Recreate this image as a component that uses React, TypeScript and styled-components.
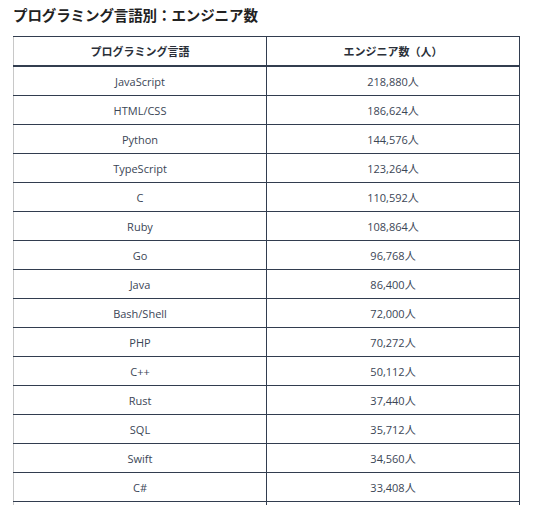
import * as React from "react";
import styled, { createGlobalStyle } from "styled-components";

const rows: [string, string][] = [
	["JavaScript", "218,880人"],
	["HTML/CSS", "186,624人"],
	["Python", "144,576人"],
	["TypeScript", "123,264人"],
	["C", "110,592人"],
	["Ruby", "108,864人"],
	["Go", "96,768人"],
	["Java", "86,400人"],
	["Bash/Shell", "72,000人"],
	["PHP", "70,272人"],
	["C++", "50,112人"],
	["Rust", "37,440人"],
	["SQL", "35,712人"],
	["Swift", "34,560人"],
	["C#", "33,408人"],
	["", ""],
];

const GlobalStyle = createGlobalStyle`
	body {
		margin: 0;
		background: #fff;
		font-family: "Open Sans", "Noto Sans CJK JP", sans-serif;
	}
`;

const App = () => {
	return (
		<Page>
			<GlobalStyle />
			<Title>プログラミング言語別：エンジニア数</Title>
			<Table>
				<thead>
					<tr>
						<HeadCell>プログラミング言語</HeadCell>
						<HeadCell>エンジニア数（人）</HeadCell>
					</tr>
				</thead>
				<tbody>
					{rows.map(([lang, count], i) => (
						<tr key={i}>
							<Cell>{lang}</Cell>
							<Cell>{count}</Cell>
						</tr>
					))}
				</tbody>
			</Table>
		</Page>
	);
};

const Page = styled.div`
	padding: 6px 13px 0 13px;
	width: 507px;
	height: 499px;
	overflow: hidden;
`;

const Title = styled.h2`
	margin: 0 0 12px;
	font-family: "Noto Sans CJK JP", sans-serif;
	font-size: 14.5px;
	font-weight: 700;
	line-height: 18px;
	color: #222;
	letter-spacing: -0.1px;
`;

const Table = styled.table`
	width: 507px;
	border-collapse: collapse;
	table-layout: fixed;
	border-top: 1px solid #323d4f;
	border-right: 1px solid #323d4f;
	border-left: 1px solid #c8c8c8;

	thead tr {
		border-bottom: 2px solid #323d4f;
	}

	tbody tr {
		border-bottom: 1px solid #323d4f;
	}
`;

const HeadCell = styled.th`
	height: 28px;
	padding: 0;
	text-align: center;
	font-family: "Noto Sans CJK JP", sans-serif;
	font-size: 11px;
	font-weight: 700;
	color: #2a2f38;
	& + & {
		border-left: 1px solid #323d4f;
	}
`;

const Cell = styled.td`
	height: 28px;
	padding: 0;
	text-align: center;
	font-size: 11px;
	color: #3b4656;
	& + & {
		border-left: 1px solid #323d4f;
	}
`;

export default App;
